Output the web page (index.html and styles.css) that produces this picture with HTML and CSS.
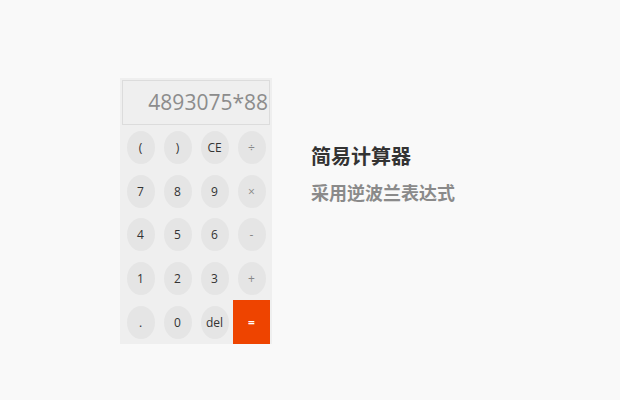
FILE: index.html
```html
<!DOCTYPE html>
<html lang="zh">
<head>
<meta charset="utf-8">
<title>简易计算器</title>
<link rel="stylesheet" href="styles.css">
</head>
<body>
<main class="stage">
  <section class="calc">
    <div class="display">4893075*88</div>
    <div class="keys">
      <button class="key">(</button>
      <button class="key">)</button>
      <button class="key">CE</button>
      <button class="key op">÷</button>
      <button class="key">7</button>
      <button class="key">8</button>
      <button class="key">9</button>
      <button class="key op">×</button>
      <button class="key">4</button>
      <button class="key">5</button>
      <button class="key">6</button>
      <button class="key op">-</button>
      <button class="key">1</button>
      <button class="key">2</button>
      <button class="key">3</button>
      <button class="key op">+</button>
      <button class="key">.</button>
      <button class="key">0</button>
      <button class="key">del</button>
      <button class="key eq">=</button>
    </div>
  </section>
  <section class="info">
    <h1 class="title">简易计算器</h1>
    <p class="sub">采用逆波兰表达式</p>
  </section>
</main>
</body>
</html>
```
FILE: styles.css
```css
html, body {
  margin: 0;
  padding: 0;
  background: #f9f9f9;
  width: 620px;
  height: 400px;
  overflow: hidden;
  font-family: "Open Sans", "Noto Sans CJK SC", sans-serif;
}
.stage {
  display: flex;
  align-items: flex-start;
  padding: 78px 0 0 120px;
  gap: 39px;
}
.calc {
  width: 148px;
  padding: 2px 2px 0 2px;
  background: #efefef;
  display: flex;
  flex-direction: column;
}
.display {
  height: 43px;
  border: 1px solid #dcdcdc;
  background: #efefef;
  color: #8c8c8c;
  font-size: 21px;
  line-height: 43px;
  text-align: right;
  padding-right: 1px;
  white-space: nowrap;
}
.keys {
  display: grid;
  grid-template-columns: repeat(4, 37px);
  grid-template-rows: repeat(5, 43.6px);
  margin-top: 1px;
}
.key {
  border: 0;
  padding: 0;
  margin: 0;
  background: transparent;
  position: relative;
  font-family: "Open Sans", sans-serif;
  font-size: 12px;
  color: #333;
  display: flex;
  align-items: center;
  justify-content: center;
}
.key::before {
  content: "";
  position: absolute;
  left: 50%;
  top: 50%;
  width: 28px;
  height: 33px;
  margin: -16.5px 0 0 -14px;
  border-radius: 50%;
  background: #e5e5e5;
}
.key.op { color: #888; }
.key.eq {
  background: #ee4400;
  color: #fff;
  font-weight: bold;
}
.key.eq::before { display: none; }
.key { z-index: 0; }
.key::before { z-index: -1; }
.info {
  margin-top: 64px;
}
.title {
  margin: 0;
  font-family: "Noto Sans CJK SC", sans-serif;
  font-size: 20px;
  font-weight: bold;
  color: #333;
  line-height: 28px;
}
.sub {
  margin: 10px 0 0 0;
  font-family: "Noto Sans CJK SC", sans-serif;
  font-size: 18px;
  font-weight: bold;
  color: #8a8a8a;
  line-height: 24px;
}
```
